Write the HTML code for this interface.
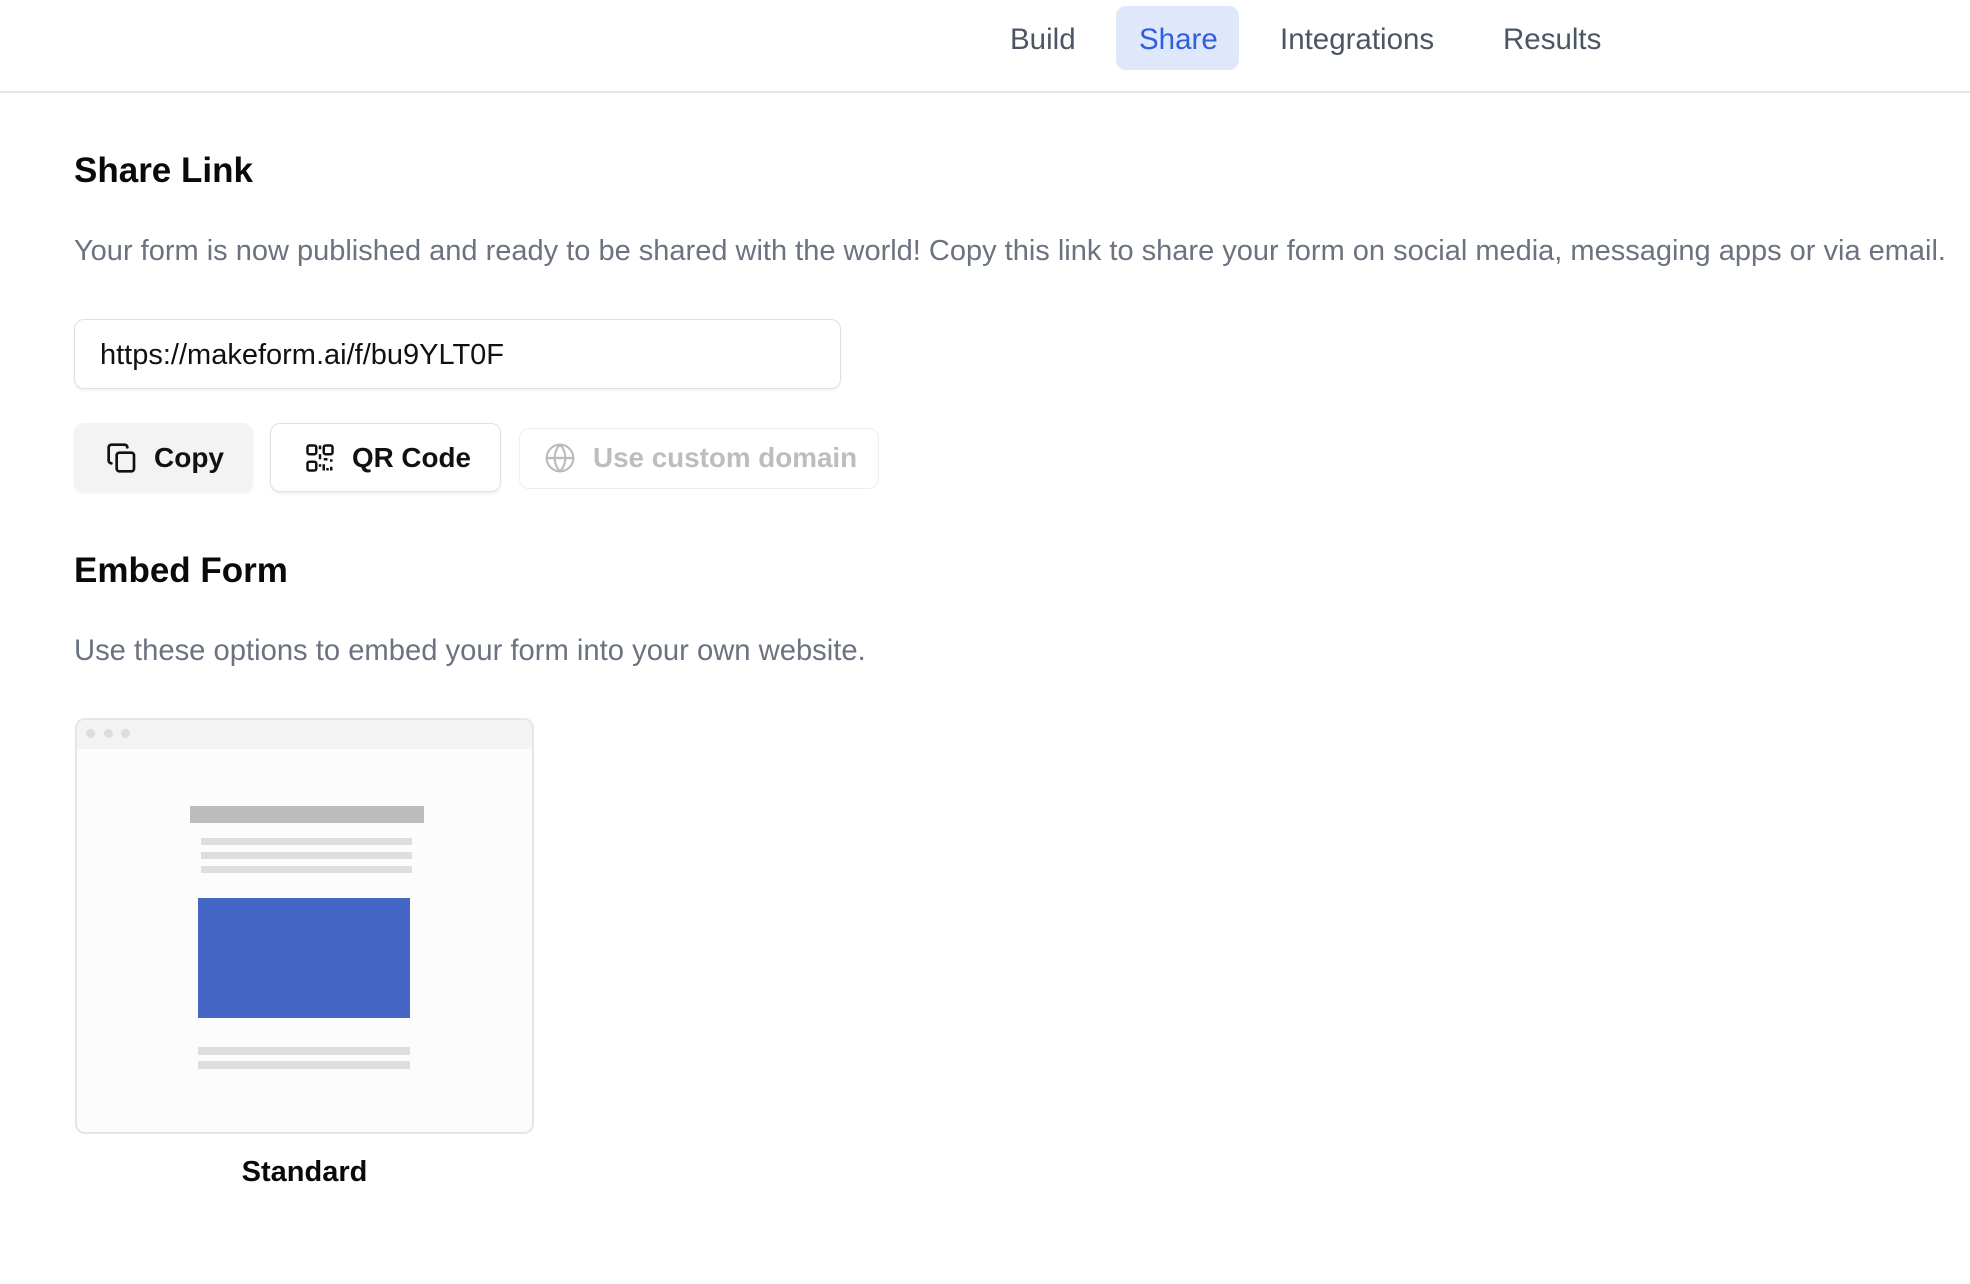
<!DOCTYPE html>
<html><head><meta charset="utf-8"><style>
*{margin:0;padding:0;box-sizing:border-box}
body{width:1970px;height:1284px;background:#fff;font-family:"Liberation Sans",sans-serif;position:relative;overflow:hidden}
.a{position:absolute;white-space:nowrap}
.nav{font-size:29.5px;color:#4b5563;top:23px}
</style></head><body>
<div class="a" style="left:1116px;top:6px;width:123px;height:64px;background:#dfe8fb;border-radius:10px"></div>
<div class="a nav" style="left:1010px">Build</div>
<div class="a nav" style="left:1139px;color:#2f5fe0">Share</div>
<div class="a nav" style="left:1280px">Integrations</div>
<div class="a nav" style="left:1503px">Results</div>
<div class="a" style="left:0;top:91px;width:1970px;height:2px;background:#e5e5e5"></div>

<div class="a" style="left:74px;top:151px;font-size:35px;font-weight:bold;color:#0a0a0a">Share Link</div>
<div class="a" style="left:74px;top:235px;font-size:29px;color:#6b7280">Your form is now published and ready to be shared with the world! Copy this link to share your form on social media, messaging apps or via email.</div>

<div class="a" style="left:74px;top:319px;width:767px;height:70px;border:1.5px solid #e0e0e0;border-radius:10px;box-shadow:0 2px 2px rgba(0,0,0,.05)"></div>
<div class="a" style="left:100px;top:339px;font-size:29px;color:#111">https://makeform.ai/f/bu9YLT0F</div>

<div class="a" style="left:74px;top:423px;width:179px;height:69px;background:#f3f3f3;border-radius:10px;box-shadow:0 2px 3px rgba(0,0,0,.05)"></div>
<svg class="a" style="left:106px;top:442px" width="32" height="32" viewBox="0 0 24 24" fill="none" stroke="#111" stroke-width="2" stroke-linecap="round" stroke-linejoin="round"><rect x="8" y="8" width="13" height="14" rx="2"/><path d="M4 16c-1 0-2-1-2-2V4c0-1 1-2 2-2h10c1 0 2 1 2 2"/></svg>
<div class="a" style="left:154px;top:442px;font-size:28px;font-weight:bold;color:#111">Copy</div>

<div class="a" style="left:270px;top:423px;width:231px;height:69px;border:1.5px solid #e0e0e0;border-radius:10px;box-shadow:0 2px 2px rgba(0,0,0,.06)"></div>
<svg class="a" style="left:305px;top:443px" width="30" height="30" viewBox="0 0 24 24" fill="none" stroke="#111" stroke-width="2"><rect x="2" y="2" width="7" height="7" rx="1.5"/><rect x="15" y="2" width="7" height="7" rx="1.5"/><rect x="2" y="15" width="7" height="7" rx="1.5"/><path d="M12 2v3M12 9v4M15 13h3M21 13v2M15 17v5M18 20v2M21 19v3M12 17v2"/></svg>
<div class="a" style="left:352px;top:442px;font-size:27.8px;font-weight:bold;color:#111">QR Code</div>

<div class="a" style="left:519px;top:428px;width:360px;height:61px;border:1.5px solid #eeeeee;border-radius:10px"></div>
<svg class="a" style="left:544px;top:442px" width="32" height="32" viewBox="0 0 24 24" fill="none" stroke="#bbb" stroke-width="1.6"><circle cx="12" cy="12" r="10"/><path d="M2 12h20M12 2c3 3 4 6.5 4 10s-1 7-4 10c-3-3-4-6.5-4-10s1-7 4-10z"/></svg>
<div class="a" style="left:593px;top:442px;font-size:27.8px;font-weight:bold;color:#bdbdbd">Use custom domain</div>

<div class="a" style="left:74px;top:551px;font-size:35px;font-weight:bold;color:#0a0a0a">Embed Form</div>
<div class="a" style="left:74px;top:635px;font-size:29.2px;color:#6b7280">Use these options to embed your form into your own website.</div>

<div class="a" style="left:75px;top:718px;width:459px;height:416px;border:2px solid #e6e6e6;border-radius:10px;background:#fcfcfc;overflow:hidden">
 <div style="height:29px;background:#f3f3f3"></div>
</div>
<div class="a" style="left:86px;top:729px;width:9px;height:9px;border-radius:50%;background:#ddd"></div>
<div class="a" style="left:104px;top:729px;width:9px;height:9px;border-radius:50%;background:#ddd"></div>
<div class="a" style="left:121px;top:729px;width:9px;height:9px;border-radius:50%;background:#ddd"></div>
<div class="a" style="left:190px;top:806px;width:234px;height:17px;background:#bcbcbc"></div>
<div class="a" style="left:201px;top:838px;width:211px;height:7px;background:#dedede"></div>
<div class="a" style="left:201px;top:852px;width:211px;height:7px;background:#dedede"></div>
<div class="a" style="left:201px;top:866px;width:211px;height:7px;background:#dedede"></div>
<div class="a" style="left:198px;top:898px;width:212px;height:120px;background:#4366c4"></div>
<div class="a" style="left:198px;top:1047px;width:212px;height:8px;background:#dedede"></div>
<div class="a" style="left:198px;top:1061px;width:212px;height:8px;background:#dedede"></div>
<div class="a" style="left:75px;top:1156px;width:459px;text-align:center;font-size:29px;font-weight:bold;color:#0a0a0a">Standard</div>
</body></html>
